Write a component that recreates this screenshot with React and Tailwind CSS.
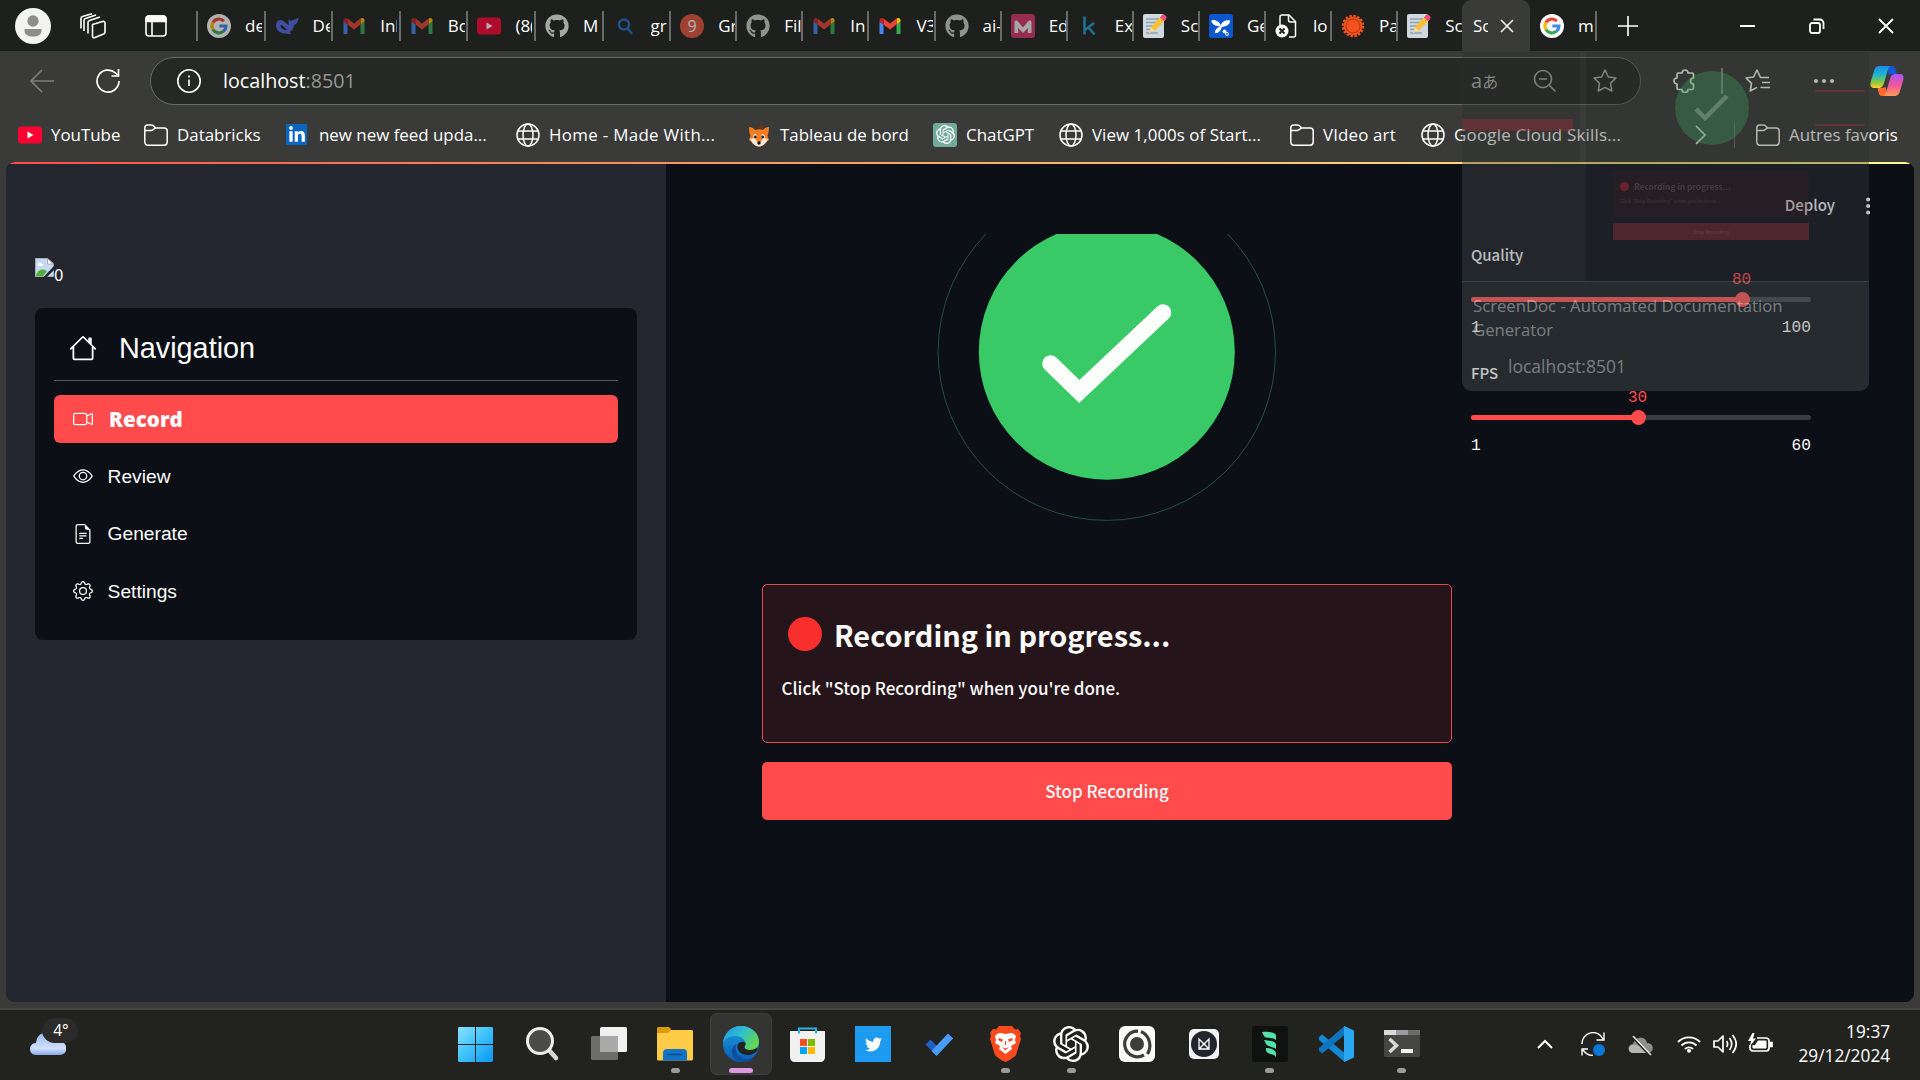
import React from 'react';
import { SiOpenai } from 'react-icons/si';
import { FaTwitter, FaGithub, FaLinkedinIn } from 'react-icons/fa6';
import { BsHouse, BsCameraVideo, BsEye, BsFileEarmarkText, BsGear } from 'react-icons/bs';

/* ---------- favicons ---------- */

const Google = () => (
  <svg viewBox="0 0 24 24" className="size-6">
    <circle cx="12" cy="12" r="12" fill="#fff" />
    <g fill="none" strokeWidth="3.1">
      <path d="M16.9 7.1A7 7 0 0 0 6 8.4" stroke="#ea4335" />
      <path d="M6 8.4a7 7 0 0 0 0 7.2" stroke="#fbbc05" />
      <path d="M6 15.6a7 7 0 0 0 10.6 1.6" stroke="#34a853" />
      <path d="M16.6 17.2A7 7 0 0 0 19 12h-6.6" stroke="#4285f4" />
    </g>
  </svg>
);

const Whale = () => (
  <svg viewBox="0 0 24 24" className="size-6" fill="#5268e8">
    <path d="M1 11c0-3 2-5 4-5 3-.5 4 2 6 3 1 .6 2 2 3 2-.5-2-1-4 0-6 .5 1.500 1.500 2 3 1.500C19 6 21 4.500 23.500 4c0 3-1.500 6-4.500 7-.3 4-2.500 6-4.500 7l2 1.500c-2 .8-4 .3-5 0C5 20 1 16 1 11z" />
    <path d="M5 11c3 0 5 3 7 5-3 .5-6-1-7-5z" fill="#1e201d" />
  </svg>
);

const Gmail = () => (
  <svg viewBox="0 0 24 24" className="size-6">
    <path d="M1.500 20h4V10.500L1.500 7.500z" fill="#4285f4" />
    <path d="M18.500 20h4V7.500l-4 3z" fill="#34a853" />
    <path d="M18.500 4.500v6l4-3V6c0-2-2.300-2.700-4-1.500z" fill="#fbbc04" />
    <path d="M5.500 10.500v-6L12 9.400l6.500-4.900v6L12 15.400z" fill="#ea4335" />
    <path d="M1.500 6v1.500l4 3v-6C3.800 3.300 1.500 4 1.500 6z" fill="#c5221f" />
  </svg>
);

const YouTube = () => (
  <svg viewBox="0 0 24 24" className="size-6">
    <rect y="3.500" width="24" height="17" rx="3.500" fill="#ff0033" />
    <path d="M9.500 8.500v7l6-3.500z" fill="#fff" />
  </svg>
);

const BlueSearch = () => (
  <svg viewBox="0 0 24 24" className="size-6" fill="none" stroke="#1f6fc0" strokeWidth="2.500">
    <circle cx="11" cy="10.500" r="5" />
    <path d="M14.500 14.500 19 20" />
  </svg>
);

const RedNine = () => (
  <span className="flex size-6 items-center justify-center rounded-full bg-[#e5533d] text-base text-white">9</span>
);

const Kaggle = () => (
  <svg viewBox="0 0 24 24" className="size-6" fill="none" stroke="#20a0d0" strokeWidth="2.600">
    <path d="M7.500 2.500v18M17 9l-8.500 6.500M11 13l6.500 7.500" />
  </svg>
);

const PinkM = () => (
  <svg viewBox="0 0 24 24" className="size-6">
    <rect width="24" height="24" rx="3" fill="#d8326f" />
    <path d="M3.500 19V8.500C3.500 6 6 6 7 7.500l5 6 5-6c1-1.500 3.500-1.500 3.500 1V19h-3.700v-5L12 19l-4.800-5v5z" fill="#eee" />
  </svg>
);

const Memo = () => (
  <svg viewBox="0 0 24 24" className="size-6">
    <rect x="0" y="0" width="21" height="24" rx="2" fill="#cfd8df" />
    <path d="M3 5h13M3 8.500h12M3 12h9M3 15.500h6M3 19h12" stroke="#8fa3b0" strokeWidth="1.300" />
    <path d="m6 19 2-6L19 1.500 23 5 12 16.500z" fill="#fbc02d" />
    <path d="m17 3.500 2.500-2.700c.8-.8 1.500-.6 2.300.1l1.300 1.300c.8.8.8 1.500.1 2.200L21 7z" fill="#ef4a81" />
    <path d="m6 19 2-6 4 3.500z" fill="#f3d6a6" />
  </svg>
);

const Butterfly = () => (
  <svg viewBox="0 0 24 24" className="size-6">
    <rect width="24" height="24" rx="3" fill="#0b57d0" />
    <path d="M11.500 12.500C6.500 12.500 2 9.500 2.500 6.500 5.500 5 10.500 7.500 11.800 11.500 12.500 8 16.500 5.500 21 6.500 21.500 10 17.500 12.500 12.800 13c-.8 4-3.800 6.500-6.800 6C5.500 16.500 8 13.500 11.500 12.500z" fill="#fff" />
    <circle cx="15.500" cy="17.300" r="1.900" fill="#fff" />
    <circle cx="18" cy="20" r="1.500" fill="none" stroke="#fff" />
  </svg>
);

const FileX = () => (
  <svg viewBox="0 0 24 24" className="size-6" fill="none" stroke="#fff" strokeWidth="1.500">
    <path d="M5 11V3c0-1.200.8-2 2-2h7l6.500 6.500V21c0 1.200-.8 2-2 2H14" />
    <path d="M13.500 1v5c0 1.200.8 2 2 2h5" />
    <circle cx="7" cy="17" r="6.500" fill="#fff" stroke="none" />
    <path d="m4.500 14.500 5 5m0-5-5 5" stroke="#222" strokeWidth="2" />
  </svg>
);

const Sun = () => (
  <svg viewBox="0 0 24 24" className="size-6">
    <circle cx="12" cy="12" r="10" fill="none" stroke="#f4511e" strokeWidth="2.500" strokeDasharray="2.400 1.530" />
    <circle cx="12" cy="12" r="9.300" fill="#f4511e" />
    <circle cx="12" cy="12" r="7" fill="none" stroke="#8a3512" strokeWidth=".8" />
  </svg>
);

const Folder = () => (
  <svg viewBox="0 0 24 24" className="size-6" fill="none" stroke="currentColor" strokeWidth="1.500" strokeLinejoin="round">
    <path d="M.8 5c0-2 1-3 3-3h3.500c1 0 1.600.3 2.300 1l2 2H20c2 0 3.200 1.200 3.200 3v11c0 2-1.200 3.200-3.200 3.200H4c-2 0-3.200-1.200-3.200-3.200z" />
    <path d="M.8 7.500H7c1 0 1.600-.3 2.300-1L11.500 4.800" />
  </svg>
);

const Globe = () => (
  <svg viewBox="0 0 24 24" className="size-6" fill="none" stroke="#fff" strokeWidth="1.500">
    <circle cx="12" cy="12" r="11" />
    <ellipse cx="12" cy="12" rx="5" ry="11" />
    <path d="M2 8h20M2 16h20" />
  </svg>
);

const LinkedIn = () => (
  <span className="mr-[3px] flex h-[21px] w-[21px] items-center justify-center bg-[#0a66c2] text-[18px] text-white">
    <FaLinkedinIn />
  </span>
);

const Fox = () => (
  <svg viewBox="0 0 24 24" className="size-6">
    <path d="M14 0c3 2 2.500 5 1 7l-4-2c2-1 3-3 3-5z" fill="#7b2d0c" />
    <path d="M2 4c3 0 5 1.500 6 3 3-1 5-1 8 0 1-1.500 3-3 6-3 0 5-1 7-1.500 9L22 17c-2 1-3 3-5 4.500-3 2.500-7 2.500-10 0C5 20 4 18 2 17l1.500-4C3 11 2 9 2 4z" fill="#f57c1f" />
    <path d="M3 16c3-1 5-1 6 1l3 4 3-4c1-2 3-2 6-1-2 4-5 7.500-9 7.500S5 20 3 16z" fill="#fde7d6" />
    <ellipse cx="8" cy="13.500" rx="1.700" ry="2.200" fill="#fff" />
    <ellipse cx="16" cy="13.500" rx="1.700" ry="2.200" fill="#fff" />
    <circle cx="8.300" cy="14" r="1.400" fill="#123" />
    <circle cx="15.700" cy="14" r="1.400" fill="#123" />
    <circle cx="12" cy="20" r="1.700" fill="#112" />
  </svg>
);

const ChatGptBadge = () => (
  <span className="flex size-6 items-center justify-center rounded-[3px] bg-[#74aa9c] text-[19px] text-white">
    <SiOpenai />
  </span>
);

/* ---------- tab strip ---------- */

const firstTabs = [
  ['de', <Google />, true],
  ['De', <Whale />, true],
  ['Inl', <Gmail />, true],
  ['Bo', <Gmail />, true],
  ['(8(', <YouTube />, true],
  ['M', <FaGithub className="size-6 text-[#f0f0f0]" />, true],
  ['gr', <BlueSearch />, true],
];

const moreTabs = [
  ['Gr', <RedNine />, true],
  ['Fil', <FaGithub className="size-6 text-[#d0d0d0]" />, true],
  ['In', <Gmail />, true],
  ['V3', <Gmail />, false],
  ['ai-', <FaGithub className="size-6 text-[#d0d0d0]" />, true],
  ['Ed', <PinkM />, true],
  ['Ex', <Kaggle />, true],
  ['Sc', <Memo />, false],
  ['Ge', <Butterfly />, false],
  ['lo', <FileX />, false],
  ['Pa', <Sun />, false],
];

function Tab({ label, icon, faded, width }) {
  return (
    <div className={`flex h-[30px] shrink-0 items-center border-l-2 border-[#6a6b69] pl-[9px] ${width}`}>
      <span className={`flex size-6 shrink-0 items-center justify-center ${faded ? 'opacity-65' : ''}`}>{icon}</span>
      <span className="ml-[14px] w-[17px] shrink-0 overflow-hidden whitespace-nowrap">{label}</span>
    </div>
  );
}

function TabStrip() {
  return (
    <div className="flex h-[51px] items-center bg-[#1e201d] text-[17px] text-white">
      <svg viewBox="0 0 36 36" className="ml-[15px] size-9 shrink-0">
        <circle cx="18" cy="18" r="18" fill="#f3f4f2" />
        <circle cx="18" cy="13" r="5.700" fill="#8d8d8b" />
        <path d="M9.500 21h17v1.500c0 4-3.500 6-8.500 6s-8.500-2-8.500-6z" fill="#8d8d8b" />
      </svg>
      <svg viewBox="0 0 26 26" className="ml-[29px] size-[26px] shrink-0" fill="none" stroke="#fff" strokeWidth="1.600" strokeLinejoin="round">
        <path d="m12.500 11.500 10-3c1.500-.4 2.500.2 2.500 1.500v9c0 1-.5 1.600-1.400 2l-8.600 3.500c-1.500.6-2.500 0-2.500-1.500z" />
        <path d="M8 20.500V9.500c0-1 .5-1.700 1.500-2L20 4" />
        <path d="M4 18V7.500c0-1 .5-1.700 1.500-2L16 2" />
        <path d="M1 15.500V5.500c0-1 .5-1.700 1.500-2L12 .8" />
      </svg>
      <svg viewBox="0 0 22 22" className="ml-[39px] size-[22px] shrink-0" fill="none" stroke="#fff" strokeWidth="1.600">
        <rect x="1" y="1" width="20" height="20" rx="3" />
        <path d="M1 4a3 3 0 0 1 3-3h14a3 3 0 0 1 3 3v2.500H1z" fill="#fff" />
        <path d="M7 6v15" />
      </svg>
      <div className="ml-[29px] flex">
        {firstTabs.map(([l, i, f], k) => (
          <Tab key={k} label={l} icon={i} faded={f} width="w-[67.6px]" />
        ))}
        {moreTabs.map(([l, i, f], k) => (
          <Tab key={k} label={l} icon={i} faded={f} width="w-[66.1px]" />
        ))}
        <Tab label="Sc" icon={<Memo />} width="w-[65.7px]" />
      </div>
      <div className="flex h-full w-[68px] shrink-0 items-center rounded-t-[9px] bg-[#3a3b39] pl-[11px]">
        <span className="w-[15px] overflow-hidden whitespace-nowrap">Sc</span>
        <svg viewBox="0 0 14 14" className="ml-[12px] size-[14px]" stroke="#fff" strokeWidth="1.500">
          <path d="M1 1l12 12M13 1 1 13" />
        </svg>
      </div>
      <div className="ml-[10px] flex h-[30px] w-[57px] shrink-0 items-center border-r-2 border-[#6a6b69]">
        <Google />
        <span className="ml-[14px] w-[16px] overflow-hidden">m</span>
      </div>
      <svg viewBox="0 0 20 20" className="ml-[21px] size-5 shrink-0" stroke="#fff" strokeWidth="1.600">
        <path d="M10 0v20M0 10h20" />
      </svg>
      <div className="ml-[102px] h-[2px] w-[15px] bg-white" />
      <svg viewBox="0 0 16 16" className="ml-[54px] size-4 shrink-0" fill="none" stroke="#fff" strokeWidth="1.800">
        <rect x="1" y="5" width="10" height="10" rx="2" />
        <path d="M4.500 1.500H11A3.500 3.500 0 0 1 14.500 5v6" />
      </svg>
      <svg viewBox="0 0 16 16" className="ml-[53px] size-4 shrink-0" stroke="#fff" strokeWidth="1.800">
        <path d="M1 1l14 14M15 1 1 15" />
      </svg>
    </div>
  );
}

/* ---------- address bar ---------- */

const Copilot = () => (
  <svg viewBox="0 0 34 32" className="ml-[35px] h-[32px] w-[34px] shrink-0">
    <defs>
      <linearGradient id="cpA" x1="0" y1="0" x2="0" y2="1">
        <stop offset="0" stopColor="#1a8cf0" />
        <stop offset=".4" stopColor="#1fb8c9" />
        <stop offset=".75" stopColor="#8fc93a" />
        <stop offset="1" stopColor="#ffd02f" />
      </linearGradient>
      <linearGradient id="cpB" x1="0" y1="0" x2="0" y2="1">
        <stop offset="0" stopColor="#a855f7" />
        <stop offset=".5" stopColor="#f0569b" />
        <stop offset="1" stopColor="#ff9a56" />
      </linearGradient>
    </defs>
    <path d="M16 1h5.500c3 0 4 2 4.800 5l.7 3h-5l-3 1z" fill="#1557d6" />
    <path d="M18 31h-5.500c-3 0-3.500-2-4.300-5L7.500 23h5l3-1z" fill="#ff6a2b" />
    <path d="M10 1h11c-2 .5-3 3-3.700 6L14 18c-1 3.500-2.300 5-5.500 5H4c-3 0-4-2.500-3.300-6L4 6c1-3.500 2.500-5 6-5z" fill="url(#cpA)" />
    <path d="M24 31H13c2-.5 3-3 3.700-6L20 14c1-3.500 2.300-5 5.500-5H30c3 0 4 2.500 3.300 6L30 26c-1 3.500-2.500 5-6 5z" fill="url(#cpB)" />
  </svg>
);

function AddressBar() {
  return (
    <div className="flex h-[60px] items-center text-white">
      <svg viewBox="0 0 24 24" className="ml-[30px] size-6 shrink-0" fill="none" stroke="#7c7d7b" strokeWidth="1.600">
        <path d="M12 1 1 12l11 11M1 12h23" />
      </svg>
      <svg viewBox="0 0 24 24" className="ml-[42px] size-6 shrink-0" fill="none" stroke="#fff" strokeWidth="1.700">
        <path d="M23 12A11 11 0 1 1 19.500 4L22 6.500" />
        <path d="M22.500 0v7h-7" />
      </svg>
      <div className="ml-[30px] flex h-[48px] w-[1491px] shrink-0 items-center rounded-full border-[1.500px] border-[#6a6b69] bg-[#262825]">
        <svg viewBox="0 0 24 24" className="ml-[26px] size-6 shrink-0" fill="none" stroke="#fff" strokeWidth="1.600">
          <circle cx="12" cy="12" r="11.200" />
          <path d="M12 10.500V17M12 6.500v2" />
        </svg>
        <span className="ml-[22px] w-[1248px] shrink-0 text-[19.7px]">
          localhost<span className="text-[#969795]">:8501</span>
        </span>
        <span className="w-[28px] shrink-0 whitespace-nowrap text-[20px] text-[#b4b5b3]">
          a<span className="font-['Noto_Sans_CJK_JP'] text-[16px]">あ</span>
        </span>
        <svg viewBox="0 0 24 24" className="ml-[34px] size-6 shrink-0" fill="none" stroke="#a9aaa8" strokeWidth="1.600">
          <circle cx="10" cy="10" r="8.500" />
          <path d="M16 16l6.500 6.500M6 10h8" />
        </svg>
        <svg viewBox="0 0 24 24" className="ml-[36px] size-6 shrink-0" fill="none" stroke="#b4b5b3" strokeWidth="1.500" strokeLinejoin="round">
          <path d="m12 1 3.400 7 7.600 1-5.500 5.300 1.300 7.700L12 18.400 5.200 22l1.300-7.700L1 9l7.600-1z" />
        </svg>
      </div>
      <svg viewBox="0 0 24 24" className="ml-[32px] size-6 shrink-0" fill="none" stroke="#fff" strokeWidth="1.700" strokeLinejoin="round">
        <path d="M4 5.500C4 4.500 4.500 4 5.500 4H9a3 3 0 1 1 6 0h4c1 0 1.500.500 1.500 1.500V9a3 3 0 1 0 0 6v4c0 1-.5 1.500-1.500 1.500h-4a3 3 0 0 1-6 0H5.500C4.500 20.500 4 20 4 19v-4a3 3 0 1 1 0-6z" />
      </svg>
      <div className="ml-[24px] h-[26px] w-[1.5px] bg-[#8a8b89]" />
      <svg viewBox="0 0 26 24" className="ml-[22px] h-6 w-[26px] shrink-0" fill="none" stroke="#fff" strokeWidth="1.600" strokeLinejoin="round">
        <path d="M24 8.500h-8.500L12 1 8.600 8 1 9l5.500 5.300L5.200 22l6.800-3.600M17 13.500h8M15.500 18.500H25" />
      </svg>
      <svg viewBox="0 0 22 6" className="ml-[42px] h-[6px] w-[22px] shrink-0" fill="#fff">
        <circle cx="3" cy="3" r="2.100" />
        <circle cx="11" cy="3" r="2.100" />
        <circle cx="19" cy="3" r="2.100" />
      </svg>
      <Copilot />
    </div>
  );
}

const bookmarks = [
  ['YouTube', <YouTube />, 'w-[126px]'],
  ['Databricks', <Folder />, 'w-[142px]'],
  ['new new feed upda...', <LinkedIn />, 'w-[230px]'],
  ['Home - Made With...', <Globe />, 'w-[231px] tracking-[0.32px]'],
  ['Tableau de bord', <Fox />, 'w-[186px]'],
  ['ChatGPT', <ChatGptBadge />, 'w-[126px]'],
  ['View 1,000s of Start...', <Globe />, 'w-[231px] tracking-[0.05px]'],
  ['VIdeo art', <Folder />, 'w-[131px] tracking-[0.15px]'],
  ['Google Cloud Skills...', <Globe />, 'w-[273px] tracking-[0.22px]'],
];

function BookmarkBar() {
  return (
    <div className="flex h-[51px] items-center pb-[3px] pl-[18px] text-[16.9px] text-white">
      {bookmarks.map(([label, icon, w]) => (
        <div key={label} className={`flex shrink-0 items-center whitespace-nowrap ${w}`}>
          <span className="flex size-6 shrink-0 items-center justify-center">{icon}</span>
          <span className="ml-[9px]">{label}</span>
        </div>
      ))}
      <svg viewBox="0 0 12 20" className="h-5 w-3 shrink-0" fill="none" stroke="#fff" strokeWidth="1.700">
        <path d="m2 1 9 9-9 9" />
      </svg>
      <div className="ml-[28px] h-[26px] w-px bg-[#6a6b69]" />
      <span className="ml-[21px] shrink-0">
        <Folder />
      </span>
      <span className="ml-[9px] whitespace-nowrap">Autres favoris</span>
    </div>
  );
}

/* ---------- page ---------- */

const navItems = [
  ['Review', <BsEye />],
  ['Generate', <BsFileEarmarkText />],
  ['Settings', <BsGear />],
];

const BrokenImage = () => (
  <svg viewBox="0 0 19 19" className="size-[19px]">
    <path d="M.5.500h12l6 5.500v12.500H.5z" fill="#c7d9f4" stroke="#a8abb0" />
    <path d="M3 6.500C3 4 6.500 4 7 6c1.500 0 1.500 2 0 2H4C2.500 8 2.500 6.500 3 6.500z" fill="#fff" />
    <path d="M12.500.500v5.500h6z" fill="#fff" stroke="#a8abb0" />
    <path d="M1 18c1-5 4-7 8-6.500l3 2L8 18z" fill="#4caf35" />
    <path d="M19 8 8.500 19H12l7-7z" fill="#262730" />
  </svg>
);

function Sidebar() {
  return (
    <aside className="w-[660px] shrink-0 bg-[#252730] pt-[94px] pr-[29px] pl-[29px] font-['Liberation_Sans',sans-serif] text-white">
      <div className="flex h-[24px]">
        <BrokenImage />
        <span className="mt-[6px] font-['Noto_Sans_CJK_SC',sans-serif] text-[17px] leading-5">0</span>
      </div>
      <nav className="mt-[26px] h-[332px] rounded-[8px] bg-[#0c0f16] px-[19px] pt-[14px]">
        <div className="flex h-[59px] items-center border-b border-[#55565a] pb-[6px] pl-[15px] text-[28.8px] leading-none">
          <BsHouse className="size-[28px]" />
          <span className="ml-[22px]">Navigation</span>
        </div>
        <div className="mt-[14px] flex h-[48px] items-center rounded-[6px] bg-[#ff4b4b] pl-[19px]">
          <BsCameraVideo className="size-[20px]" />
          <span className="ml-[16px] font-['Open_Sans',sans-serif] text-[20.6px] font-extrabold">Record</span>
        </div>
        {navItems.map(([label, icon]) => (
          <div key={label} className="mt-[9.5px] flex h-[48px] items-center pl-[19px] text-[19.2px]">
            <span className="-mt-px text-[20px]">{icon}</span>
            <span className="mt-[1px] ml-[14.6px]">{label}</span>
          </div>
        ))}
      </nav>
    </aside>
  );
}

function Slider({ label, value, max, fill, handle, className }) {
  return (
    <div className={`flex flex-col ${className}`}>
      <span className="h-5 text-[15px] leading-5 font-medium">{label}</span>
      <div className="mt-[5px] flex h-5 font-['Liberation_Mono',monospace] text-[16px] leading-5 text-[#ff4b4b]">
        <span className={fill} />
        <span className="-ml-[10px]">{value}</span>
      </div>
      <div className="mt-[7.5px] flex h-[5px] items-center rounded-full bg-[#3a3c44]">
        <span className={`h-[5px] rounded-full bg-[#ff4b4b] ${fill}`} />
        <span className={`-ml-[7px] size-[14.5px] shrink-0 rounded-full bg-[#ff4b4b] ${handle}`} />
      </div>
      <div className="mt-[15.5px] flex h-5 justify-between font-['Liberation_Mono',monospace] text-[16.2px] leading-5">
        <span>1</span>
        <span>{max}</span>
      </div>
    </div>
  );
}

function Main() {
  return (
    <main className="flex min-w-0 flex-1 flex-col bg-[#0c0f16] font-['Noto_Sans_CJK_SC',sans-serif] text-[#fafafa]">
      <header className="flex h-[70px] shrink-0 items-start justify-end pt-[30.5px] pr-[44px]">
        <span className="text-[15px] leading-5 font-medium">Deploy</span>
        <svg viewBox="0 0 4 18" className="mt-[2px] ml-[31px] h-[18px] w-1" fill="#fff">
          <circle cx="2" cy="2.500" r="2" />
          <circle cx="2" cy="9" r="2" />
          <circle cx="2" cy="15.500" r="2" />
        </svg>
      </header>
      <div className="flex">
        <section className="ml-[96px] w-[690px] shrink-0">
          <svg viewBox="0 0 690 300" className="h-[300px] w-[690px]" fill="none">
            <circle cx="344.800" cy="117.700" r="168.700" stroke="#22503c" />
            <circle cx="344.800" cy="117.700" r="128" fill="#3ac967" />
            <path d="M288.500 129.500 317.300 157.500 401 78.500" stroke="#fdfffd" strokeWidth="16.600" strokeLinecap="round" />
          </svg>
          <div className="mt-[50px] h-[159px] rounded-[5px] border border-[#e5484d] bg-[#25151a]">
            <div className="mt-[28.5px] flex h-10 items-center pl-[25px]">
              <span className="size-[34px] rounded-full bg-[#f92f2d]" />
              <h2 className="ml-[12px] text-[28.9px] leading-10 font-semibold">Recording in progress...</h2>
            </div>
            <p className="mt-[21px] pl-[18.5px] text-[17px] leading-[26px] font-medium">Click "Stop Recording" when you're done.</p>
          </div>
          <button className="mt-[19px] h-[58px] w-full rounded-[5px] bg-[#ff4b4b] text-[17px] leading-[58px] font-medium">
            Stop Recording
          </button>
        </section>
        <section className="ml-[19px] w-[340px]">
          <Slider label="Quality" value="80" max="100" fill="w-[271px]" className="mt-[10.5px]" />
          <Slider label="FPS" value="30" max="60" fill="w-[167px]" className="mt-[25px]" />
        </section>
      </div>
    </main>
  );
}

/* Fading hover card of the active tab */
function TabPreview() {
  return (
    <div className="absolute top-[52px] left-[1462px] h-[339px] w-[407px] overflow-hidden rounded-b-[9px] text-[16.7px] text-white/40">
      <div className="h-[111px] bg-[#2c2e2c]/35">
        <div className="flex h-full">
          <div className="w-[118px] pt-[67px]">
            <div className="h-[12px] w-[111px] bg-[#a03038]/40" />
          </div>
          <div className="h-full w-[6px] bg-white/[0.03]" />
          <svg viewBox="0 0 80 111" className="ml-[86px] h-[111px] w-[80px]">
            <circle cx="40" cy="56" r="37" fill="#3ea55f" fillOpacity=".34" />
            <path d="m24 57 9 9 22-22" fill="none" stroke="#fff" strokeOpacity=".22" strokeWidth="4.500" />
          </svg>
          <div className="mt-[38px] ml-[63px] h-[36px] w-[50px] border-y-2 border-[#b03038]/40" />
        </div>
      </div>
      <div className="flex h-[118px] bg-[#3d4144]/35">
        <div className="h-full w-[124px] bg-white/[0.03]" />
        <div className="ml-[27px] w-[196px] pt-[8px] font-['Noto_Sans_CJK_SC',sans-serif]">
          <div className="h-[46px] bg-[#4a1a20]/20 pt-[8px] pl-[7px]">
            <div className="flex items-center gap-[5px] text-[8.3px] leading-[14px] font-semibold text-white/15">
              <span className="size-[9px] rounded-full bg-[#c02438]/45" />
              Recording in progress...
            </div>
            <div className="mt-[3px] text-[5px] leading-[10px] text-white/10">Click "Stop Recording" when you're done.</div>
          </div>
          <div className="mt-[6px] h-[17px] bg-[#b03438]/35 text-center text-[5px] leading-[17px] text-white/10">Stop Recording</div>
        </div>
      </div>
      <div className="h-[110px] border-t border-white/10 bg-[#5a6060]/35 pt-[12px] pl-[11px]">
        <div className="leading-[23.5px]">ScreenDoc - Automated Documentation<br />Generator</div>
        <div className="mt-[13px] pl-[35px] text-[17.5px] leading-[24px]">localhost:8501</div>
      </div>
    </div>
  );
}

/* ---------- taskbar ---------- */

const StartIcon = () => (
  <svg viewBox="0 0 35 35" className="size-[35px]">
    <defs>
      <linearGradient id="win" x1="0" y1="0" x2="1" y2="1">
        <stop offset="0" stopColor="#8be0ff" />
        <stop offset=".5" stopColor="#3dc1fb" />
        <stop offset="1" stopColor="#0a96f5" />
      </linearGradient>
    </defs>
    <path d="M1 0h16v17H0V1zM18 0h16l1 1v16H18zM0 18h17v17H1l-1-1zM18 18h17v16l-1 1H18z" fill="url(#win)" />
  </svg>
);

const SearchIcon = () => (
  <svg viewBox="0 0 36 36" className="size-9" fill="none">
    <path d="m23 23 8 9" stroke="#d9d9d9" strokeWidth="4.500" strokeLinecap="round" />
    <circle cx="15" cy="15" r="12.500" fill="#4b4c4a" stroke="#ededed" strokeWidth="3" />
  </svg>
);

const TaskViewIcon = () => (
  <svg viewBox="0 0 36 34" className="h-[34px] w-9">
    <rect x="9" y="0" width="27" height="25" rx="1.500" fill="#f0f1f0" />
    <rect x="0" y="9" width="27" height="24" rx="1.500" fill="#6c6d6b" />
    <path d="M9 9h18v16H9z" fill="#a8a9a8" />
  </svg>
);

const FilesIcon = () => (
  <svg viewBox="0 0 36 34" className="h-[34px] w-9">
    <path d="M0 1.500C0 .6.600 0 1.500 0H11c1 0 1.500.3 2 1l2 3-3 4H0z" fill="#dc9b05" />
    <path d="M0 6h11l3-3h20.500c.9 0 1.500.6 1.500 1.500V32c0 .9-.6 1.500-1.500 1.500h-33C.6 33.500 0 32.900 0 32z" fill="#fdcb45" />
    <path d="M6 33.500V26c0-2.500 1.500-4 4-4h16c2.500 0 4 1.500 4 4v7.500z" fill="#1374c5" />
    <path d="M10.500 27.500h15" stroke="#0b4a86" strokeWidth="1.500" />
  </svg>
);

const EdgeIcon = () => (
  <svg viewBox="0 0 36 36" className="size-9">
    <defs>
      <linearGradient id="eA" x1="0" y1="0" x2="1" y2=".6">
        <stop offset="0" stopColor="#2294dd" />
        <stop offset=".5" stopColor="#2fbdd0" />
        <stop offset="1" stopColor="#64d84f" />
      </linearGradient>
      <linearGradient id="eB" x1="0" y1="0" x2="0" y2="1">
        <stop offset="0" stopColor="#1b9de2" />
        <stop offset="1" stopColor="#0a5cb5" />
      </linearGradient>
    </defs>
    <circle cx="18" cy="18" r="18" fill="url(#eB)" />
    <path d="M0 17C1 7 8.500 0 18 0c10 0 18 7 18 15.500C36 21 32 24 27.500 24c-4.500 0-6.500-1.500-6-3 .5-1 1-1.800 1-3.500 0-4-5-7.500-10.500-7.500C6 10 1.500 13 0 17z" fill="url(#eA)" />
    <path d="M13.500 18c-3 7 2 15 10 15 4 0 7-1.500 9.500-4.500C30 33.500 25 36 20 36c-7 0-12-6-11-12 .5-3 2-5 4.500-6z" fill="#0d4f9e" />
    <path d="M22.500 17.500c0 1.700-.5 2.500-1 3.500-.5 1.500 1.500 3 6 3 2.500 0 4.500-.8 6-2 1 0 1.500 1 1 2-1.500 2.500-5 5-10 5-7 0-12-6-9.500-11 1.500-2.500 7.500-3 7.500-.5z" fill="#22231f" />
  </svg>
);

const StoreIcon = () => (
  <svg viewBox="0 0 35 35" className="size-[35px]">
    <path d="M0 4h35v26c0 3-2 5-5 5H5c-3 0-5-2-5-5z" fill="#f1f1f1" />
    <path d="M9 6.500v-5h17v5" fill="none" stroke="#2fb3e3" strokeWidth="2.200" />
    <path d="M10 12h7v7h-7z" fill="#f25022" />
    <path d="M18 12h7v7h-7z" fill="#7fba00" />
    <path d="M10 20h7v7h-7z" fill="#00a4ef" />
    <path d="M18 20h7v7h-7z" fill="#ffb900" />
  </svg>
);

const TodoIcon = () => (
  <svg viewBox="0 0 28 24" className="h-6 w-7" fill="none" strokeWidth="7">
    <path d="m3 10 8.500 8.500" stroke="#1e5fc4" />
    <path d="M9 21.500 25.500 4" stroke="#4b9bff" />
  </svg>
);

const BraveIcon = () => (
  <svg viewBox="0 0 31 36" className="h-9 w-[31px]">
    <path d="M9 0h13l3 3.500 3-.5 3 4-1 3 1 3-5 16c-.5 1.500-9 7-10.500 7S5.500 30.500 5 29L0 13l1-3-1-3 3-4 3 .5z" fill="#fb4a1e" />
    <path d="M5 10c2-2 3-3 5-3l5.500 1L21 7c2 0 3 1 5 3l-1 4 1 3-5 3 1 3-6.500 5L9 23l1-3-5-3 1-3z" fill="#fff" />
    <path d="m9 12 4 1.500L12 16l-4-2zM22 12l-4 1.500 1 2.500 4-2zM12 21l3.500 1.500L19 21l-3.500 3.500zM15 15h1v4l-.5.500-.5-.5z" fill="#fb4a1e" />
  </svg>
);

const RingIcon = () => (
  <svg viewBox="0 0 36 36" className="size-9" fill="none">
    <rect width="36" height="36" rx="6" fill="#fbfbf8" />
    <circle cx="18" cy="18" r="7" fill="#3d3d3a" />
    <path d="M19 5.200A12.800 12.800 0 1 0 25 29" stroke="#3d3d3a" strokeWidth="3.200" />
    <path d="M22 5.500c9 4 11 15 6.500 22.500" stroke="#3d3d3a" strokeWidth="3.200" />
  </svg>
);

const BadgeIcon = () => (
  <svg viewBox="0 0 30 30" className="size-[30px]" fill="none">
    <rect width="30" height="30" rx="5" fill="#f2f2f4" />
    <circle cx="15" cy="15" r="13" fill="#23242c" />
    <path d="M10 10v10h10V10l-5 5zM10 20l5-5 5 5" stroke="#fff" strokeWidth="1.300" />
  </svg>
);

const WingIcon = () => (
  <svg viewBox="0 0 36 36" className="size-9" fill="#54e0ad">
    <rect width="36" height="36" rx="2" fill="#101211" />
    <path d="M10 6c6-1 12 0 14 3v5c-4-3-10-1-12-4zM12 14c4 1 10 0 12 4v5c-4-3-8-2-10-5zM14 22c4 0 9 1 10 5v4c-3-4-8-2-10-6z" />
  </svg>
);

const CodeIcon = () => (
  <svg viewBox="0 0 36 36" className="size-9">
    <path d="m1 11 3-2.500L29 28l-3 7.500L1 14z" fill="#1288d2" />
    <path d="m1 25 3 2.500L29 8 26 .500 1 22z" fill="#0c75bd" />
    <path d="m26 0 9 4c.6.300 1 1 1 1.500v25c0 .6-.4 1.200-1 1.500l-9 4z" fill="#2ba7f2" />
    <path d="M26 9.500 15.500 18 26 26.500z" fill="#22231f" />
  </svg>
);

const TerminalIcon = () => (
  <svg viewBox="0 0 36 28" className="h-7 w-9" fill="none">
    <rect width="36" height="27" rx="1.500" fill="#454644" />
    <path d="M0 0h12v5H0z" fill="#d8d8d8" />
    <path d="M12 0h12v5H12z" fill="#9c9c9c" />
    <path d="M24 0h12v5H24z" fill="#6c6c6c" />
    <path d="m5.500 9 7 6.500-7 6.500" stroke="#d8d8d8" strokeWidth="3.500" />
    <path d="M17 21h12" stroke="#f3f3f3" strokeWidth="4" />
  </svg>
);

const apps = [
  [<StartIcon />],
  [<SearchIcon />],
  [<TaskViewIcon />],
  [<FilesIcon />, 'dot'],
  [<EdgeIcon />, 'active'],
  [<StoreIcon />],
  [<span className="flex size-9 items-center justify-center bg-[#1d9bf0] text-[17px] text-white"><FaTwitter /></span>],
  [<TodoIcon />],
  [<BraveIcon />, 'dot'],
  [<SiOpenai className="size-9 text-white" />, 'dot'],
  [<RingIcon />],
  [<BadgeIcon />],
  [<WingIcon />, 'dot'],
  [<CodeIcon />],
  [<TerminalIcon />, 'dot'],
];

function Taskbar() {
  return (
    <footer className="flex h-[70px] items-start bg-[#22231f] text-white">
      <div className="relative mt-[12px] ml-[30px] h-[36px] w-[412px] shrink-0">
        <svg viewBox="0 0 36 23" className="mt-[10px] h-[23px] w-9">
          <defs>
            <linearGradient id="cloud" x1="0" y1="0" x2="0" y2="1">
              <stop offset="0" stopColor="#9db8ee" />
              <stop offset=".7" stopColor="#cfe0fb" />
              <stop offset="1" stopColor="#88a8ea" />
            </linearGradient>
          </defs>
          <path d="M6 23c-8 0-8-12 0-12C7 4 10 1 16 1c7 0 10 5 11 8 12-1 12 14 3 14z" fill="url(#cloud)" />
        </svg>
        <span className="absolute -top-[4px] left-[12px] flex h-[25px] w-[36px] items-center justify-center rounded-full bg-[#2b2c29] pl-[2px] text-[15.5px]">4°</span>
      </div>
      <div className="flex shrink-0 gap-[0.05px]">
        {apps.map(([icon, state], k) => (
          <div key={k} className="flex w-[66px] flex-col items-center pt-1 first:mr-[2px]">
            <div className={`flex h-[60px] w-[60px] flex-col items-center rounded-[6px] ${state === 'active' ? 'bg-[#343532] ring-1 ring-[#3e3f3c]' : ''}`}>
              <div className="mt-[12px] flex h-9 items-center">{icon}</div>
              {state === 'dot' && <span className="mt-[6px] h-[5px] w-[9px] rounded-full bg-[#9a9b99]" />}
              {state === 'active' && <span className="mt-[6px] h-[5px] w-6 rounded-full bg-[#dc9be0]" />}
            </div>
          </div>
        ))}
      </div>
      <div className="ml-[102.5px] flex h-[68px] items-center">
        <svg viewBox="0 0 16 10" className="h-[10px] w-4" fill="none" stroke="#fff" strokeWidth="2">
          <path d="m1 9 7-7 7 7" />
        </svg>
        <svg viewBox="0 0 24 24" className="ml-[28px] size-6" fill="none" stroke="#fff" strokeWidth="1.400">
          <path d="M1 12A11 11 0 0 1 22 7M23 .5V8h-7.500M1 23.500V17h6M2 18c3 4 6 5.500 10 5.500" />
          <circle cx="18" cy="18" r="6" fill="#0a78d8" stroke="none" />
        </svg>
        <svg viewBox="0 0 25 20" className="mt-[3px] ml-[23px] h-5 w-[25px]">
          <path d="M5 17c-6 0-6-9 0-9C7 0 18 0 19 7c8 0 7 10 1 10z" fill="#8e8f8d" />
          <path d="M5 17c-5 0-6-8 1-8 4 0 7 2 10 4l6 3-2 1z" fill="#b5b6b4" />
          <path d="m4 0 18 19" stroke="#22231f" strokeWidth="3" />
          <path d="m5 0 18 19" stroke="#fff" strokeWidth="1.400" />
        </svg>
        <svg viewBox="0 0 24 18" className="ml-[24px] h-[18px] w-6" fill="none" stroke="#fff" strokeWidth="1.900">
          <path d="M1 7a15.500 15.500 0 0 1 22 0M4.500 10.500a10.500 10.500 0 0 1 15 0M8 14a5.700 5.700 0 0 1 8 0" />
          <circle cx="12" cy="15.800" r="2" fill="#fff" stroke="none" />
        </svg>
        <svg viewBox="0 0 24 20" className="ml-[12px] h-5 w-6" fill="none" stroke="#fff" strokeWidth="1.700" strokeLinejoin="round">
          <path d="M1 7h4l5-5v16l-5-5H1zM13.500 7c1.500 2 1.500 4 0 6M16.500 4c3 4 3 8 0 12M19.500 1c5 6 5 12 0 18" />
        </svg>
        <svg viewBox="0 0 25 20" className="mb-[2px] ml-[11px] h-5 w-[25px]" fill="none" stroke="#fff" strokeWidth="1.700">
          <path d="M9 5h9c2 0 3 1 3 3v7c0 2-1 3-3 3H5c-2 0-3-1-3-3v-3" />
          <path d="M10 7.500h7.500c.7 0 1 .3 1 1v6c0 .7-.3 1-1 1H5.500c-.7 0-1-.3-1-1V12H7z" fill="#fff" stroke="none" />
          <path d="M22 9.500h2v4h-2z" fill="#fff" />
          <path d="M4.500 0 0 8h3l-1 5 6-7.500H5L6.500 0z" fill="#fff" stroke="none" />
        </svg>
      </div>
      <div className="mt-[9.5px] ml-[22px] w-[95px] text-right text-[17.3px] leading-6 whitespace-nowrap">
        <div>19:37</div>
        <div>29/12/2024</div>
      </div>
    </footer>
  );
}

export default function App() {
  return (
    <div className="relative flex h-[1080px] w-[1920px] flex-col overflow-hidden bg-[#3a3b39] font-['Open_Sans',sans-serif]">
      <TabStrip />
      <AddressBar />
      <BookmarkBar />
      <div className="mr-[6px] ml-[6px] flex h-[840px] shrink-0 flex-col overflow-hidden rounded-[9px] bg-[#0c0f16]">
        <div className="h-[2px] shrink-0 bg-linear-to-r from-[#ff4b4b] to-[#fdfd80]" />
        <div className="flex h-[838px]">
          <Sidebar />
          <Main />
        </div>
      </div>
      <div className="h-[8px] shrink-0 border-b-2 border-[#454643]" />
      <Taskbar />
      <TabPreview />
    </div>
  );
}
